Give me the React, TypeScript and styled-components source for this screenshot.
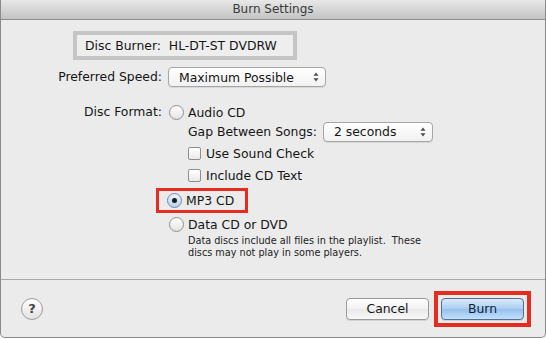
import styled, { createGlobalStyle } from "styled-components"

const Global = createGlobalStyle`
  html, body {
    margin: 0;
    padding: 0;
    background: #ffffff;
  }
`

const Window = styled.div`
  width: 546px;
  height: 338px;
  box-sizing: border-box;
  border: 1px solid #8a8a8a;
  border-top: none;
  border-radius: 0 0 5px 5px;
  background: #ebebeb;
  display: flex;
  flex-direction: column;
  overflow: hidden;
  font-family: "DejaVu Sans", "Noto Sans", sans-serif;
  font-size: 12.4px;
  color: #151515;
`

const TitleBar = styled.div`
  height: 19px;
  line-height: 19px;
  border-bottom: 1px solid #8c8c8c;
  background: linear-gradient(#e8e8e8, #c3c3c3);
  text-align: center;
  font-size: 12px;
  color: #3a3a3a;
`

const Body = styled.div`
  flex: 1;
  padding-top: 11px;
`

const BurnerBox = styled.div`
  margin-left: 72px;
  width: 224px;
  height: 29px;
  box-sizing: border-box;
  border: 4px solid #c5c5c5;
  background: #eeeeee;
  padding-left: 8px;
  display: flex;
  align-items: center;
  white-space: pre;
`

const Form = styled.div`
  margin-top: 7px;
  display: grid;
  grid-template-columns: 161px 1fr;
  column-gap: 6px;
  row-gap: 16px;
  align-items: start;
`

const Label = styled.div<{ $h: number }>`
  text-align: right;
  height: ${(p) => p.$h}px;
  line-height: ${(p) => p.$h}px;
`

const Select = styled.div<{ $w: number }>`
  width: ${(p) => p.$w}px;
  height: 20px;
  box-sizing: border-box;
  border: 1px solid #a6a6a6;
  border-radius: 4px;
  background: linear-gradient(#ffffff, #f1f1f1);
  box-shadow: 0 1px 0 rgba(0, 0, 0, 0.08);
  display: flex;
  align-items: center;
  justify-content: space-between;
  padding: 0 6px 0 10px;
`

const Options = styled.div`
  display: flex;
  flex-direction: column;
`

const Row = styled.div<{ $h: number; $indent?: boolean }>`
  display: flex;
  align-items: center;
  gap: 4px;
  height: ${(p) => p.$h}px;
  padding-left: ${(p) => (p.$indent ? 20 : 1)}px;
`

const Radio = styled.span<{ $on?: boolean }>`
  width: 15px;
  height: 15px;
  box-sizing: border-box;
  border-radius: 50%;
  border: 1px solid ${(p) => (p.$on ? "#6f86a3" : "#909090")};
  background: ${(p) =>
    p.$on
      ? "linear-gradient(#eef5fd, #b8d2ef)"
      : "linear-gradient(#ffffff, #e4e4e4)"};
  display: flex;
  align-items: center;
  justify-content: center;
  flex-shrink: 0;
  &::after {
    content: "";
    display: ${(p) => (p.$on ? "block" : "none")};
    width: 5px;
    height: 5px;
    border-radius: 50%;
    background: #1b1b1b;
  }
`

const Check = styled.span`
  width: 13px;
  height: 13px;
  box-sizing: border-box;
  border: 1px solid #8e8e8e;
  border-radius: 2px;
  background: linear-gradient(#ffffff, #eaeaea);
  margin-right: 1px;
  flex-shrink: 0;
`

const GapLabel = styled.span`
  margin-right: 2px;
`

const Highlight = styled.div<{ $w: number }>`
  border: 3px solid #e52d1f;
  height: 25px;
  width: ${(p) => p.$w}px;
  box-sizing: border-box;
  margin: 2px 0 2px -12px;
  padding-left: 8px;
  display: flex;
  align-items: center;
  gap: 4px;
`

const Note = styled.div`
  padding-left: 20px;
  margin-top: 2px;
  font-size: 9.7px;
  line-height: 11.5px;
  color: #222;
  white-space: pre;
`

const Footer = styled.div`
  height: 57px;
  border-top: 1px solid #a8a8a8;
  display: flex;
  align-items: center;
  padding: 0 14px 0 20px;
`

const Help = styled.div`
  width: 22px;
  height: 22px;
  box-sizing: border-box;
  border-radius: 50%;
  border: 1px solid #9c9c9c;
  background: linear-gradient(#ffffff, #e2e2e2);
  display: flex;
  align-items: center;
  justify-content: center;
  font-weight: bold;
  font-size: 13px;
  color: #444;
`

const Spacer = styled.div`
  flex: 1;
`

const Button = styled.div<{ $primary?: boolean }>`
  width: 83px;
  height: 22px;
  box-sizing: border-box;
  border-radius: 4px;
  border: 1px solid ${(p) => (p.$primary ? "#4f6f96" : "#9a9a9a")};
  background: ${(p) =>
    p.$primary
      ? "linear-gradient(#dcebfa, #a9cdf1 50%, #94c0ec 51%, #c4e0fb)"
      : "linear-gradient(#ffffff, #f2f2f2 50%, #e9e9e9 51%, #f8f8f8)"};
  display: flex;
  align-items: center;
  justify-content: center;
  color: ${(p) => (p.$primary ? "#0e1e36" : "#151515")};
  box-shadow: 0 1px 0 rgba(0, 0, 0, 0.1);
`

const CancelButton = styled(Button)`
  margin-right: 5px;
`

const ButtonHighlight = styled.div`
  border: 4px solid #e52d1f;
  padding: 3px;
`

function Arrows() {
  return (
    <svg width="6" height="10" viewBox="0 0 6 10">
      <path d="M3 0.5 L5.5 3.8 L0.5 3.8 Z" fill="#4a4a4a" />
      <path d="M3 9.5 L5.5 6.2 L0.5 6.2 Z" fill="#4a4a4a" />
    </svg>
  )
}

export default function App() {
  return (
    <Window>
      <Global />
      <TitleBar>Burn Settings</TitleBar>
      <Body>
        <BurnerBox>Disc Burner:  HL-DT-ST DVDRW</BurnerBox>
        <Form>
          <Label $h={20}>Preferred Speed:</Label>
          <Select $w={158}>
            <span>Maximum Possible</span>
            <Arrows />
          </Select>

          <Label $h={18}>Disc Format:</Label>
          <Options>
            <Row $h={18}>
              <Radio />
              <span>Audio CD</span>
            </Row>
            <Row $h={21} $indent>
              <GapLabel>Gap Between Songs:</GapLabel>
              <Select $w={110}>
                <span>2 seconds</span>
                <Arrows />
              </Select>
            </Row>
            <Row $h={22} $indent>
              <Check />
              <span>Use Sound Check</span>
            </Row>
            <Row $h={22} $indent>
              <Check />
              <span>Include CD Text</span>
            </Row>
            <Highlight $w={92}>
              <Radio $on />
              <span>MP3 CD</span>
            </Highlight>
            <Row $h={18}>
              <Radio />
              <span>Data CD or DVD</span>
            </Row>
            <Note>
              {"Data discs include all files in the playlist.  These\ndiscs may not play in some players."}
            </Note>
          </Options>
        </Form>
      </Body>
      <Footer>
        <Help>?</Help>
        <Spacer />
        <CancelButton>Cancel</CancelButton>
        <ButtonHighlight>
          <Button $primary>Burn</Button>
        </ButtonHighlight>
      </Footer>
    </Window>
  )
}
